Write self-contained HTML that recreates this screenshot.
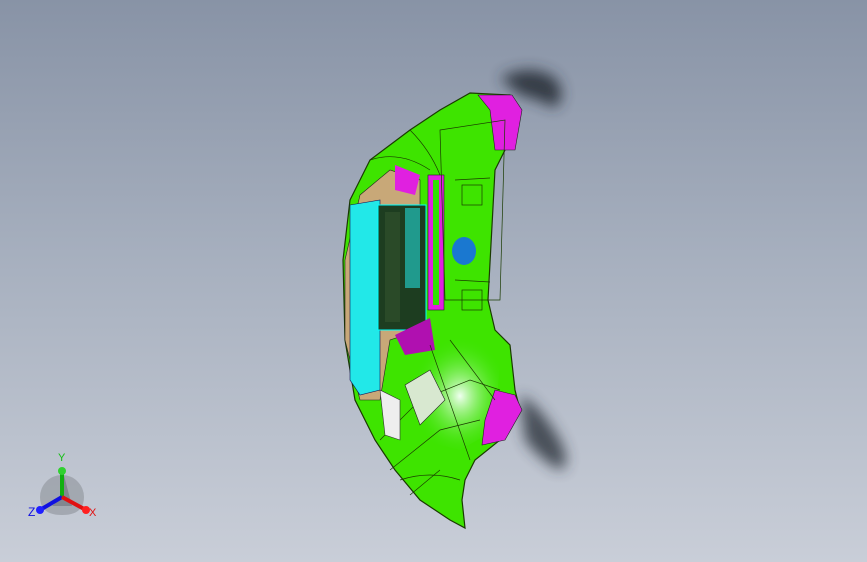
<!DOCTYPE html>
<html><head><style>
html,body{margin:0;padding:0}
body{width:867px;height:562px;overflow:hidden;background:linear-gradient(180deg,#8893a6 0%,#a6afbe 45%,#c9ced8 100%);position:relative}
svg{position:absolute;left:0;top:0}
</style></head><body>
<svg width="867" height="562" viewBox="0 0 867 562">
<defs>
<filter id="b" x="-50%" y="-50%" width="200%" height="200%"><feGaussianBlur stdDeviation="7"/></filter>
<radialGradient id="g" cx="0.6" cy="0.55" r="0.5"><stop offset="0" stop-color="#f0fff0"/><stop offset="1" stop-color="#33e000" stop-opacity="0"/></radialGradient>
</defs>
<path d="M500,78 Q530,62 555,78 Q568,95 555,108 Q540,100 520,95 Z" fill="#2c313a" filter="url(#b)" opacity="0.9"/>
<path d="M520,395 Q540,405 560,440 Q572,465 560,470 Q540,460 525,440 Z" fill="#2c313a" filter="url(#b)" opacity="0.8"/>
<polygon points="350,200 370,160 410,130 440,110 470,93 510,95 520,110 505,150 495,170 488,300 495,330 510,345 515,390 520,410 500,440 475,460 465,480 462,500 465,528 450,520 420,500 395,470 375,440 355,400 345,340 343,260" fill="#3ee400" stroke="#1a3a00" stroke-width="1.2"/>
<polygon points="400,340 470,330 500,360 495,430 460,450 420,440 400,390" fill="url(#g)"/>
<polygon points="360,195 390,170 420,180 420,330 390,340 380,400 360,400 345,340 345,260" fill="#c8a878" stroke="#222" stroke-width="0.6"/>
<polygon points="350,205 380,200 380,390 360,395 350,380" fill="#22e8e8" stroke="#115" stroke-width="0.6"/>
<rect x="378" y="205" width="48" height="125" fill="#1d3d20" stroke="#0ff" stroke-width="1"/>
<rect x="385" y="212" width="15" height="110" fill="#2a4a28"/>
<rect x="405" y="208" width="15" height="80" fill="#22e8e8" opacity="0.55"/>
<rect x="428" y="175" width="16" height="135" fill="#e020e0" stroke="#222" stroke-width="0.6"/>
<rect x="433" y="180" width="6" height="125" fill="#30e000"/>
<polygon points="395,165 420,175 415,195 395,190" fill="#e020e0"/>
<polygon points="395,335 430,318 435,350 405,355" fill="#b010b0"/>
<polygon points="478,95 512,95 522,110 515,150 495,150 490,110" fill="#e020e0" stroke="#222" stroke-width="0.6"/>
<polygon points="495,390 515,395 522,410 505,440 482,445 485,420" fill="#e020e0" stroke="#222" stroke-width="0.6"/>
<ellipse cx="464" cy="251" rx="12" ry="14" fill="#1a78d0"/>
<g fill="none" stroke="#1a3a00" stroke-width="0.7">
<polygon points="440,130 505,120 500,300 445,300"/>
<polyline points="380,440 420,400 470,380 500,390"/>
<polyline points="390,470 440,430 480,420"/>
<path d="M370,160 Q400,150 430,170 M410,130 Q430,150 440,175 M455,180 L490,178 M455,280 L490,282 M400,480 Q430,470 460,480 M410,495 L440,470 M430,345 L470,460 M450,340 L495,400"/>
<rect x="462" y="185" width="20" height="20"/><rect x="462" y="290" width="20" height="20"/>
</g>
<polygon points="405,385 430,370 445,400 420,425" fill="#d8e8d0" stroke="#222" stroke-width="0.6"/>
<polygon points="380,390 400,400 400,440 385,435" fill="#eeeeee" stroke="#333" stroke-width="0.6"/>
<!-- triad -->
<path d="M62,497 m-22,0 a22,22 0 0 1 44,0 q0,18 -22,18 q-22,0 -22,-18z" fill="#8d929a" opacity="0.6"/>
<path d="M62,497 L62,468 L72,506 L52,506z" fill="#62666d" opacity="0.5"/>
<line x1="62" y1="497" x2="62" y2="472" stroke="#10b010" stroke-width="4"/>
<circle cx="62" cy="471" r="4" fill="#30d030"/>
<line x1="62" y1="497" x2="40" y2="510" stroke="#1010e0" stroke-width="4"/>
<circle cx="40" cy="510" r="4" fill="#2020ff"/>
<line x1="62" y1="497" x2="86" y2="510" stroke="#e01010" stroke-width="4"/>
<circle cx="86" cy="510" r="4" fill="#ff2020"/>
<text x="58" y="461" font-family="Liberation Sans" font-size="11" fill="#10c010">Y</text>
<text x="28" y="516" font-family="Liberation Sans" font-size="12" fill="#1010e0">Z</text>
<text x="89" y="516" font-family="Liberation Sans" font-size="11" fill="#e01010">X</text>
</svg>
</body></html>
